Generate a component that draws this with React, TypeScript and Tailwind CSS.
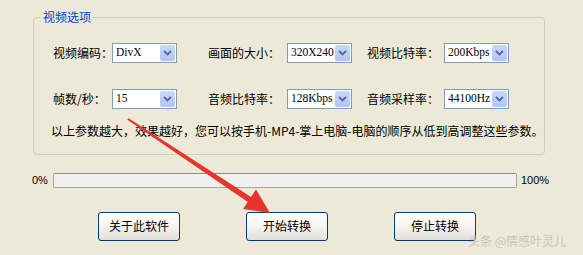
const cjk = "font-['Noto_Sans_CJK_SC',sans-serif]";

function Combo({ value }: { value: string }) {
  return (
    <div className="shrink-0 w-[65px] h-[20px] border border-[#7F9DB9] bg-white flex items-center">
      <span className="pl-[3px] text-[11.5px] leading-none text-black whitespace-nowrap font-['Liberation_Serif',serif]">{value}</span>
      <div className="ml-auto mr-[1px] shrink-0 w-[15px] h-[16px] rounded-[2px] bg-linear-to-b from-[#C9D8FC] to-[#B0C4F5] flex items-center justify-center">
        <svg width="9" height="6" viewBox="0 0 9 6">
          <path d="M1 1 L4.5 4.5 L8 1" fill="none" stroke="#4D6A9E" strokeWidth="1.8" />
        </svg>
      </div>
    </div>
  );
}

function Field({ label, value, labelW }: { label: string; value: string; labelW: string }) {
  return (
    <div className="flex items-center">
      <span className={`${labelW} shrink-0 whitespace-nowrap ${cjk} text-[12px] leading-[16px] text-black`}>{label}</span>
      <Combo value={value} />
    </div>
  );
}

function XpButton({ children }: { children: string }) {
  return (
    <button className={`w-[82px] h-[29px] border border-[#003C74] rounded-[3px] bg-linear-to-b from-white via-[#F5F4EF] to-[#E0DFD6] ${cjk} text-[12px] text-black`}>
      {children}
    </button>
  );
}

export default function App() {
  return (
    <div className={`relative w-[583px] h-[255px] bg-[#ECE9D8] overflow-hidden ${cjk}`}>
      {/* 视频选项 分组框 */}
      <div className="pl-[33px] pt-[9px]">
        <fieldset className="w-[511px] h-[146px] border border-[#D0D0BF] rounded-[4px] p-0 m-0">
          <legend className="ml-[8px] px-[1px] text-[12px] leading-[16px] text-[#0046D5]">视频选项</legend>
          <div className="pl-[19px]">
            <div className="flex mt-[18px]">
              <Field label="视频编码：" value="DivX" labelW="w-[59px]" />
              <div className="w-[31px]" />
              <Field label="画面的大小：" value="320X240" labelW="w-[79px]" />
              <div className="w-[15px]" />
              <Field label="视频比特率：" value="200Kbps" labelW="w-[77px]" />
            </div>
            <div className="flex mt-[26px]">
              <Field label="帧数/秒：" value="15" labelW="w-[59px]" />
              <div className="w-[31px]" />
              <Field label="音频比特率：" value="128Kbps" labelW="w-[79px]" />
              <div className="w-[15px]" />
              <Field label="音频采样率：" value="44100Hz" labelW="w-[77px]" />
            </div>
            <p className="mt-[14px] -ml-[2px] text-[12px] leading-[16px] text-black whitespace-nowrap">
              以上参数越大，效果越好，您可以按手机-MP4-掌上电脑-电脑的顺序从低到高调整这些参数。
            </p>
          </div>
        </fieldset>
      </div>

      {/* 进度条 */}
      <div className="flex items-center mt-[17px] pl-[32px] font-['Liberation_Sans',sans-serif] text-[11px] text-black">
        <span className="w-[21px]">0%</span>
        <div className="w-[464px] h-[15px] border border-[#A8A8A0] border-t-[#8E8E88] rounded-[2px] bg-[#F0F0EE]" />
        <span className="ml-[4px]">100%</span>
      </div>

      {/* 按钮 */}
      <div className="flex gap-[66px] pl-[98px] mt-[23px]">
        <XpButton>关于此软件</XpButton>
        <XpButton>开始转换</XpButton>
        <XpButton>停止转换</XpButton>
      </div>

      {/* 水印 */}
      <span className="absolute left-[468px] top-[232px] text-[12px] text-[#C9C7BD] whitespace-nowrap">头条 @情感叶灵儿</span>

      {/* 红色箭头 */}
      <svg className="absolute left-0 top-0 pointer-events-none" width="583" height="255" viewBox="0 0 583 255">
        <polygon points="128.6,118.2 252.7,198 249.3,203 127.4,119.8" fill="#E8352C" />
        <polygon points="270,213 243,209 256,189.5" fill="#E8352C" />
      </svg>
    </div>
  );
}
